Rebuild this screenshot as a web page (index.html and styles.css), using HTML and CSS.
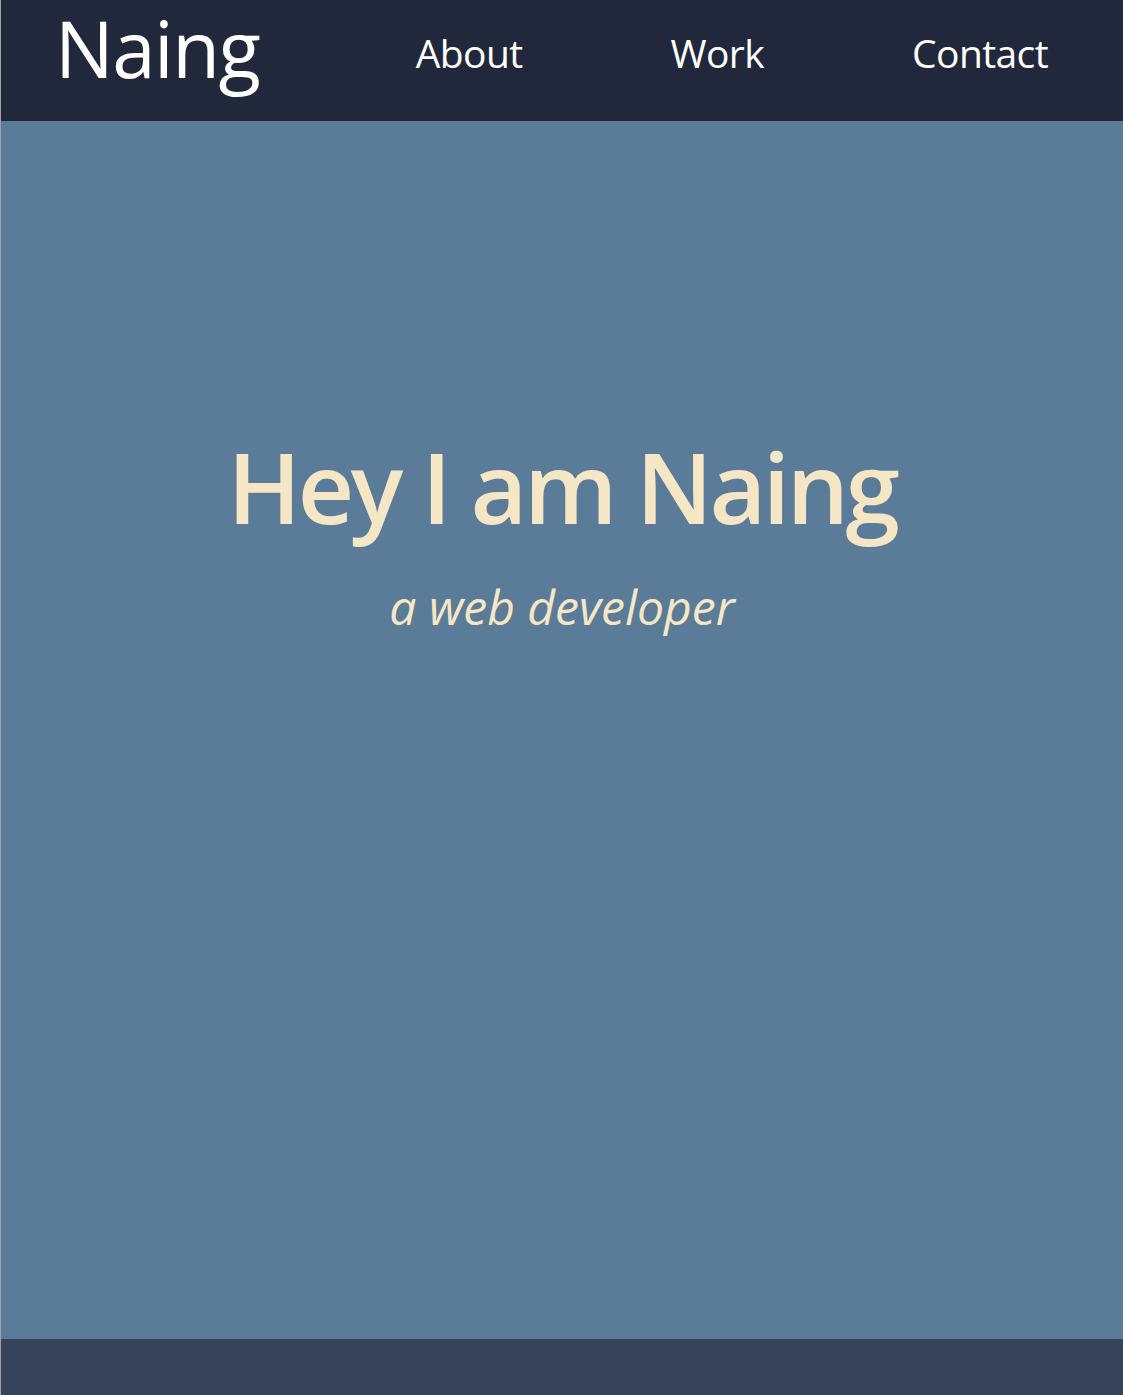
FILE: index.html
```html
<!DOCTYPE html>
<html lang="en">
<head>
<meta charset="utf-8">
<title>Naing</title>
<link rel="stylesheet" href="styles.css">
</head>
<body>
<div class="page">
  <header class="topbar">
    <div class="logo">Naing</div>
    <nav class="nav">
      <a class="nav-link" href="#about">About</a>
      <a class="nav-link" href="#work">Work</a>
      <a class="nav-link" href="#contact">Contact</a>
    </nav>
  </header>
  <main class="hero">
    <h1 class="hero-title">Hey I am Naing</h1>
    <p class="hero-sub">a web developer</p>
  </main>
  <footer class="footer"></footer>
</div>
</body>
</html>
```
FILE: styles.css
```css
html, body {
  margin: 0;
  padding: 0;
}
body {
  font-family: "Open Sans", "Noto Sans", sans-serif;
  background: #5a7c98;
}
.page {
  display: flex;
  flex-direction: column;
  height: 1395px;
  border-left: 1px solid #a3a3a3;
}
.topbar {
  height: 121px;
  box-sizing: border-box;
  background: #22283c;
  display: flex;
  align-items: flex-start;
  justify-content: space-between;
  padding-left: 54px;
}
.logo {
  color: #ffffff;
  font-size: 78px;
  line-height: 96px;
  letter-spacing: -1.5px;
}
.nav {
  display: flex;
  align-items: center;
  padding-top: 33px;
  padding-right: 75px;
  gap: 148px;
}
.nav-link {
  color: #ffffff;
  text-decoration: none;
  font-size: 39px;
  line-height: 1;
  letter-spacing: -0.6px;
}
.hero {
  flex: 1;
  background: #5a7c98;
  display: flex;
  flex-direction: column;
  align-items: center;
  padding-top: 316px;
}
.hero-title {
  margin: 0;
  color: #f5e7c6;
  font-weight: 600;
  font-size: 98px;
  line-height: 1;
  letter-spacing: -3.4px;
}
.hero-sub {
  margin: 48px 0 0;
  color: #f5e7c6;
  font-style: italic;
  font-size: 48px;
  line-height: 1;
  letter-spacing: 0;
}
.footer {
  height: 56px;
  background: #37435a;
}
```
